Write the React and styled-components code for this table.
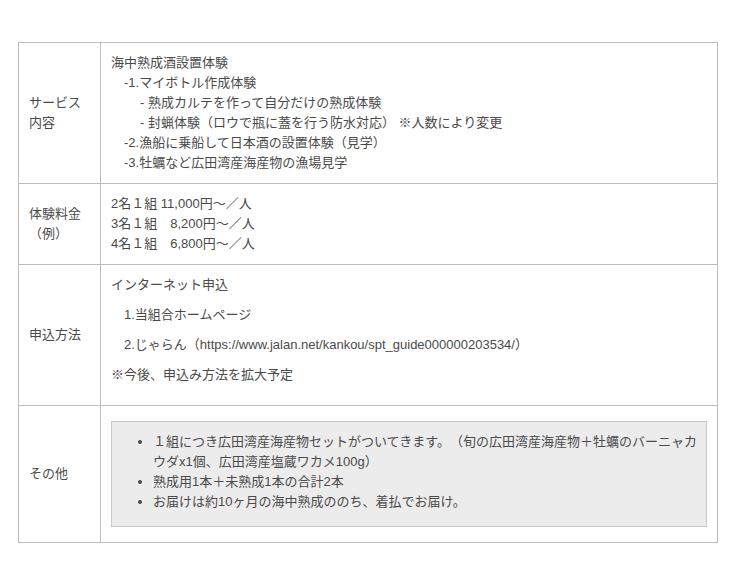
import styled, { createGlobalStyle } from "styled-components";

const GlobalStyle = createGlobalStyle`
  body {
    margin: 0;
    background: #fff;
    color: #4a4a4a;
    font-family: "Liberation Sans", "Noto Sans CJK JP", sans-serif;
    font-size: 13px;
    text-spacing-trim: space-all;
    font-feature-settings: "chws" 0;
  }
`;

const services = [
  { text: "海中熟成酒設置体験", indent: 0 },
  { text: "-1.マイボトル作成体験", indent: 13 },
  { text: "- 熟成カルテを作って自分だけの熟成体験", indent: 29 },
  { text: "- 封蝋体験（ロウで瓶に蓋を行う防水対応） ※人数により変更", indent: 29 },
  { text: "-2.漁船に乗船して日本酒の設置体験（見学）", indent: 13 },
  { text: "-3.牡蠣など広田湾産海産物の漁場見学", indent: 13 },
];

const prices = [
  "2名１組 11,000円～／人",
  "3名１組　8,200円～／人",
  "4名１組　6,800円～／人",
];

const apply = [
  { text: "インターネット申込", indent: 0 },
  { text: "1.当組合ホームページ", indent: 13 },
  { text: "2.じゃらん（https://www.jalan.net/kankou/spt_guide000000203534/）", indent: 13 },
  { text: "※今後、申込み方法を拡大予定", indent: 0 },
];

const others = [
  "１組につき広田湾産海産物セットがついてきます。（旬の広田湾産海産物＋牡蠣のバーニャカウダx1個、広田湾産塩蔵ワカメ100g）",
  "熟成用1本＋未熟成1本の合計2本",
  "お届けは約10ヶ月の海中熟成ののち、着払でお届け。",
];

export default function App() {
  return (
    <>
      <GlobalStyle />
      <Page>
        <Table>
          <tbody>
            <tr>
              <Label>
                サービス
                <br />
                内容
              </Label>
              <Cell>
                {services.map((s) => (
                  <Line key={s.text} $indent={s.indent}>
                    {s.text}
                  </Line>
                ))}
              </Cell>
            </tr>
            <tr>
              <Label>
                体験料金
                <br />
                （例）
              </Label>
              <Cell>
                {prices.map((p) => (
                  <Line key={p}>{p}</Line>
                ))}
              </Cell>
            </tr>
            <tr>
              <Label>申込方法</Label>
              <Cell>
                {apply.map((a) => (
                  <Para key={a.text} $indent={a.indent}>
                    {a.text}
                  </Para>
                ))}
              </Cell>
            </tr>
            <tr>
              <Label>その他</Label>
              <Cell>
                <NoteBox>
                  <Bullets>
                    {others.map((o) => (
                      <li key={o}>{o}</li>
                    ))}
                  </Bullets>
                </NoteBox>
              </Cell>
            </tr>
          </tbody>
        </Table>
      </Page>
    </>
  );
}

const Page = styled.div`
  padding: 42px 0 40px 18px;
`;

const Table = styled.table`
  width: 700px;
  border-collapse: collapse;
  border: 1px solid #bdbdbd;
  line-height: 20px;
`;

const Label = styled.th`
  width: 61px;
  padding: 10px;
  border: 1px solid #bdbdbd;
  text-align: left;
  font-weight: normal;
  vertical-align: middle;
`;

const Cell = styled.td`
  padding: 10px;
  border: 1px solid #bdbdbd;
  vertical-align: top;
`;

const Line = styled.div`
  padding-left: ${(p) => p.$indent || 0}px;
`;

const Para = styled.p`
  margin: 0 0 10px;
  padding-left: ${(p) => p.$indent || 0}px;
`;

const NoteBox = styled.div`
  margin: 5px 0;
  padding: 10px 3px 14px 12px;
  background: #ececec;
  border: 1px solid #c8c8c8;
`;

const Bullets = styled.ul`
  margin: 0;
  padding-left: 29px;

  li {
    margin: 0;
  }
`;
